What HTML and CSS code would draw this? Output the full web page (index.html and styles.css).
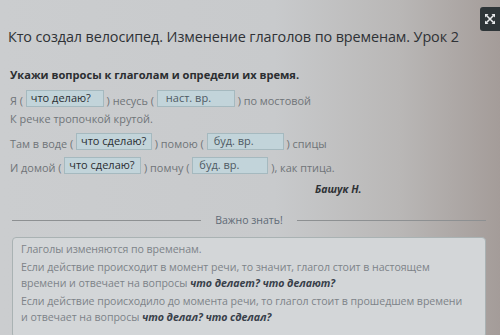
FILE: index.html
```html
<!DOCTYPE html>
<html lang="ru">
<head>
  <meta charset="UTF-8">
  <title>Изменение глаголов по временам</title>
  <link rel="stylesheet" href="styles.css">
</head>
<body>
  <div class="page">
    <header class="top">
      <h1>Кто создал велосипед. Изменение глаголов по временам. Урок 2</h1>
      <button class="expand" aria-label="Развернуть">
        <svg width="12" height="12" viewBox="0 0 12 12">
          <path d="M1 1h3.5L1 4.5zM11 1v3.5L7.5 1zM1 11V7.5L4.5 11zM11 11H7.5L11 7.5z" fill="#e8eaec"/>
          <path d="M2.5 2.5l7 7M9.5 2.5l-7 7" stroke="#e8eaec" stroke-width="1.6"/>
        </svg>
      </button>
    </header>

    <section class="task">
      <p class="task-title">Укажи вопросы к глаголам и определи их время.</p>
      <div class="line">Я ( <span class="slot q1">что делаю?</span> ) несусь ( <span class="slot t1">наст. вр.</span> ) по мостовой</div>
      <div class="line plain">К речке тропочкой крутой.</div>
      <div class="line">Там в воде ( <span class="slot q2">что сделаю?</span> ) помою ( <span class="slot t2">буд. вр.</span> ) спицы</div>
      <div class="line">И домой ( <span class="slot q3">что сделаю?</span> ) помчу ( <span class="slot t3">буд. вр.</span> ), как птица.</div>
      <p class="author">Башук Н.</p>
    </section>

    <div class="divider"><span>Важно знать!</span></div>

    <div class="note">
      <p>Глаголы изменяются по временам.</p>
      <p>Если действие происходит в момент речи, то значит, глагол стоит в настоящем<br>времени и отвечает на вопросы <b>что делает? что делают?</b></p>
      <p>Если действие происходило до момента речи, то глагол стоит в прошедшем времени<br>и отвечает на вопросы <b>что делал? что сделал?</b></p>
    </div>
  </div>
</body>
</html>
```

FILE: styles.css
```css
body {
  margin: 0;
  font-family: 'Open Sans', sans-serif;
  color: #3a3d40;
  background: linear-gradient(to right, #cbcdcf 0%, #c8cacc 55%, #b9b7b6 80%, #a49c99 100%);
  height: 335px;
  overflow: hidden;
}

.page {
  padding: 0 14px 0 10px;
}

.top {
  display: flex;
  justify-content: space-between;
  align-items: flex-start;
  height: 58px;
}

h1 {
  margin: 27px 0 0 -2px;
  font-size: 14.4px;
  font-weight: 400;
  color: #2f3236;
  letter-spacing: -0.1px;
}

.expand {
  margin: 7px -14px 0 0;
  width: 20px;
  height: 24px;
  background: #2e3538;
  border: none;
  border-radius: 3px 0 0 3px;
  padding: 0 0 0 4px;
  display: flex;
  align-items: center;
}

.task-title {
  margin: 9px 0 0;
  height: 22px;
  font-size: 11.1px;
  font-weight: 700;
  color: #2b2e31;
}

.line {
  font-size: 10.9px;
  color: #6f7478;
  height: 24px;
  display: flex;
  align-items: center;
  white-space: pre;
}

.line:first-of-type {
  height: 22px;
}

.line.plain {
  height: 14px;
  margin-bottom: 6px;
}

.slot {
  display: inline-block;
  height: 17px;
  line-height: 14px;
  box-sizing: border-box;
  border: 1px solid #a5b9bf;
  background: #c2d4da;
  padding: 0 4px;
  color: #2a2e32;
  font-size: 11px;
  margin-top: -3px;
}

.q1 { width: 78px; }
.t1 { width: 78px; padding-left: 8px; color: #4f5a63; }
.q2 { width: 76px; }
.t2 { width: 77px; padding-left: 6px; color: #4f5a63; }
.q3 { width: 77px; }
.t3 { width: 76px; padding-left: 6px; color: #4f5a63; }

.author {
  margin: 3px 0 0 305px;
  font-size: 10.5px;
  font-weight: 700;
  font-style: italic;
  color: #2f3236;
}

.divider {
  display: flex;
  align-items: center;
  gap: 14px;
  margin: 17px 0 0 2px;
  font-size: 10.5px;
  color: #5f6a76;
}

.divider::before,
.divider::after {
  content: '';
  flex: 1;
  height: 1px;
  background: #8d9092;
}

.note {
  margin: 10px 0 0 2px;
  background: #d3d6d8;
  border: 1px solid #a9b2b3;
  border-radius: 4px;
  padding: 3px 8px 10px;
  font-size: 10.6px;
  line-height: 16px;
  color: #7d8388;
  white-space: nowrap;
  letter-spacing: -0.05px;
}

.note p {
  margin: 0 0 2px;
}

.note b {
  font-style: italic;
  color: #38404a;
}
```
